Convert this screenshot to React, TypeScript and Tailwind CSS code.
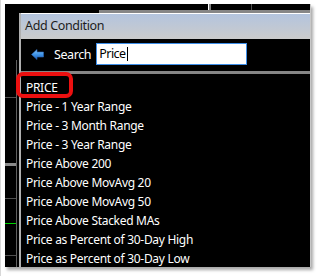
import React from "react";

const items = [
  "PRICE",
  "Price - 1 Year Range",
  "Price - 3 Month Range",
  "Price - 3 Year Range",
  "Price Above 200",
  "Price Above MovAvg 20",
  "Price Above MovAvg 50",
  "Price Above Stacked MAs",
  "Price as Percent of 30-Day High",
  "Price as Percent of 30-Day Low",
];

function BackArrow() {
  return (
    <svg width="13" height="11" viewBox="0 0 13 11">
      <defs>
        <linearGradient id="ag" x1="0" y1="0" x2="0" y2="1">
          <stop offset="0" stopColor="#8cc8f8" />
          <stop offset="0.5" stopColor="#3f93e6" />
          <stop offset="1" stopColor="#1f5fb8" />
        </linearGradient>
      </defs>
      <path d="M0.5 5.5 L6 0.5 L6 3 L12.5 3 L12.5 8 L6 8 L6 10.5 Z" fill="url(#ag)" stroke="#2a66b8" strokeWidth="0.6" />
    </svg>
  );
}

export default function App() {
  return (
    <div
      className="relative w-[317px] h-[276px] bg-white overflow-hidden"
      style={{ fontFamily: '"Noto Sans", "Open Sans", sans-serif' }}
    >
      <div className="absolute left-0 top-0 w-[1px] h-full bg-[#d8d8d8]" />
      <div className="ml-[5px] mt-[4px] w-[306px] h-[263px] bg-black flex shadow-[2px_3px_3px_rgba(0,0,0,0.35)]">
        {/* left background strip */}
        <div className="w-[14px] h-full flex flex-col relative">
          <div className="h-[93px]" />
          <div className="h-[1px] bg-[#505050] w-[11px]" />
          <div className="h-[65px]" />
          <div className="h-[3px] bg-[#8a8a8a] w-[11px]" />
          <div className="h-[32px]" />
          <div className="h-[1px] bg-[#505050] w-[11px]" />
          <div className="h-[24px]" />
          <div className="h-[1px] bg-[#00d000] w-[12px]" />
          <div className="h-[31px]" />
          <div className="h-[1px] bg-[#505050] w-[11px]" />
          <div className="absolute left-[11px] top-[56px] bottom-0 w-[1px] bg-[#606060]" />
        </div>
        {/* dialog */}
        <div className="flex-1 flex flex-col">
          <div className="h-[9px] flex flex-col">
            <div className="h-[6px] flex">
              <div className="w-[189px]" />
              <div className="w-[1px] bg-white" />
              <div className="w-[2px] bg-[#808080]" />
              <div className="w-[40px]" />
              <div className="w-[1px] bg-[#505050]" />
            </div>
            <div className="h-[3px] flex">
              <div className="w-[80px]" />
              <div className="flex-1 bg-[#868686]" />
            </div>
          </div>
          <div className="flex-1 flex flex-col border-l-2 border-[#b0b0b0]">
            <div className="h-[26px] border-t border-white bg-gradient-to-b from-[#b3c4de] to-[#cbcbcb] flex items-center pl-[4px] text-[12.5px] tracking-[-0.35px] text-[#1c1c1c]">
              Add Condition
            </div>
            <div className="h-[32px] flex items-center">
              <div className="ml-[10px] mt-[-1px] flex">
                <BackArrow />
              </div>
              <span className="ml-[10px] text-[12.5px] tracking-[-0.4px] text-white">Search</span>
              <div className="ml-[5px] mt-[-2px] w-[151px] h-[22px] bg-white border border-[#3d8ee8] flex items-center pl-[2px] text-[12.5px] tracking-[-0.5px] text-black">
                Price
                <span className="inline-block w-[1px] h-[14px] bg-black ml-[1px]" />
              </div>
            </div>
            <div className="h-[3px] bg-[#868686]" />
            <div className="flex-1 relative pt-[4px]">
              {items.map((t) => (
                <div key={t} className="h-[19px] flex items-center pl-[5px] text-[12px] tracking-[-0.3px] text-white whitespace-nowrap">
                  {t}
                </div>
              ))}
              <div className="absolute left-[-5px] top-[-2px] w-[57px] h-[26px] border-[4px] border-[#ec1010] rounded-[7px]" />
            </div>
          </div>
        </div>
        <div className="w-[1px] bg-[#c8c8c8]" />
      </div>
    </div>
  );
}
